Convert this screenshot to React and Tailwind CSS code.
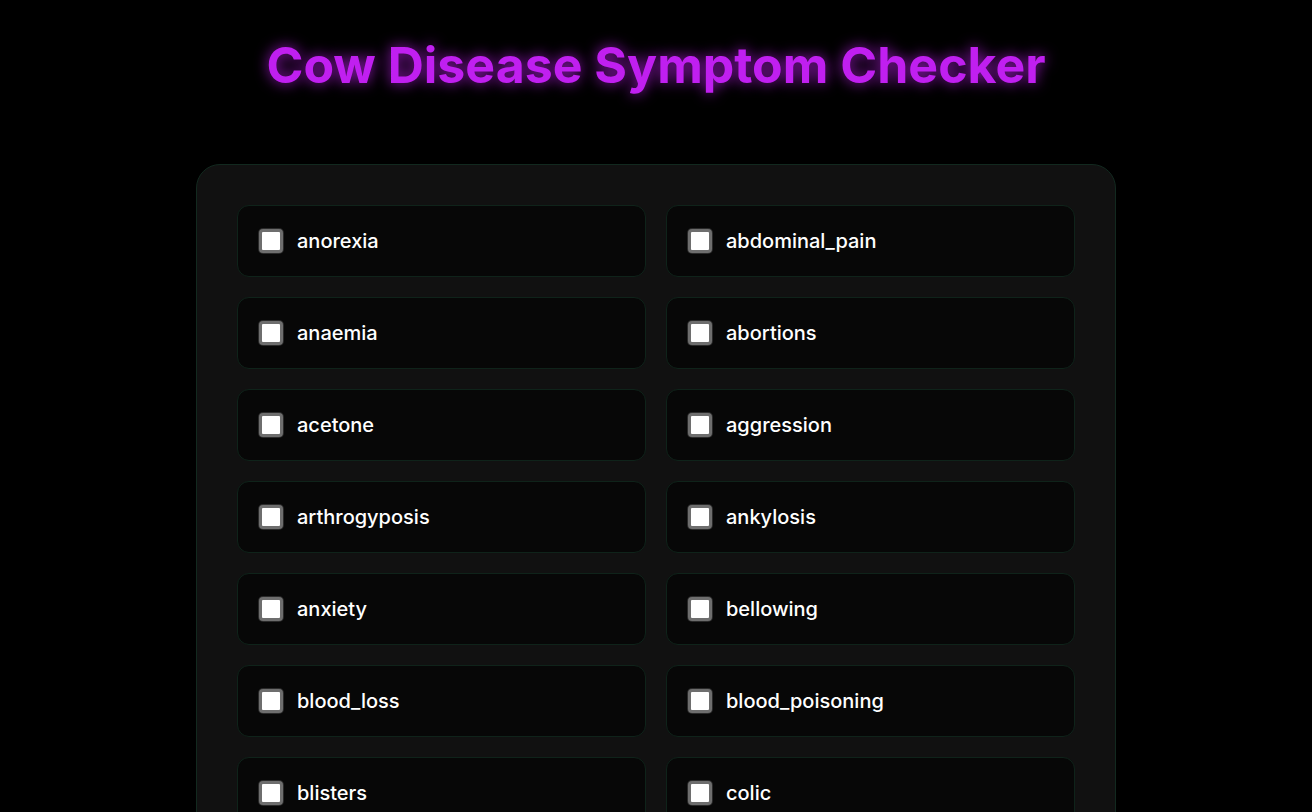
import React from "react";

const symptoms = [
  "anorexia", "abdominal_pain",
  "anaemia", "abortions",
  "acetone", "aggression",
  "arthrogyposis", "ankylosis",
  "anxiety", "bellowing",
  "blood_loss", "blood_poisoning",
  "blisters", "colic",
  "Condemnation_of_livers", "conjuctiva_pale",
  "coughing", "depression",
];

export default function App() {
  return (
    <div
      className="min-h-screen bg-black text-white"
      style={{ fontFamily: "Inter, 'Noto Sans', sans-serif" }}
    >
      <div className="pt-10 flex justify-center">
        <h1
          className="text-[50px] leading-none font-bold text-[#c01ff0]"
          style={{ textShadow: "0 0 14px rgba(192,31,240,0.8)" }}
        >
          Cow Disease Symptom Checker
        </h1>
      </div>
      <div className="mt-[74px] flex justify-center">
        <div className="w-[920px] bg-[#111111] border border-[#12291f] rounded-[24px] p-10">
          <div className="grid grid-cols-2 gap-5">
            {symptoms.map((s) => (
              <label
                key={s}
                className="h-[72px] flex items-center pl-[21px] pr-5 bg-[#070707] border border-[#0f231a] rounded-[12px]"
              >
                <span className="w-6 h-6 rounded-[4px] border-[3px] border-[#6e6e6e] bg-white shrink-0 shadow-[0_0_0_1px_#2a2a2a]" />
                <span className="ml-[14px] text-[20px] font-medium text-white">
                  {s}
                </span>
              </label>
            ))}
          </div>
        </div>
      </div>
    </div>
  );
}
